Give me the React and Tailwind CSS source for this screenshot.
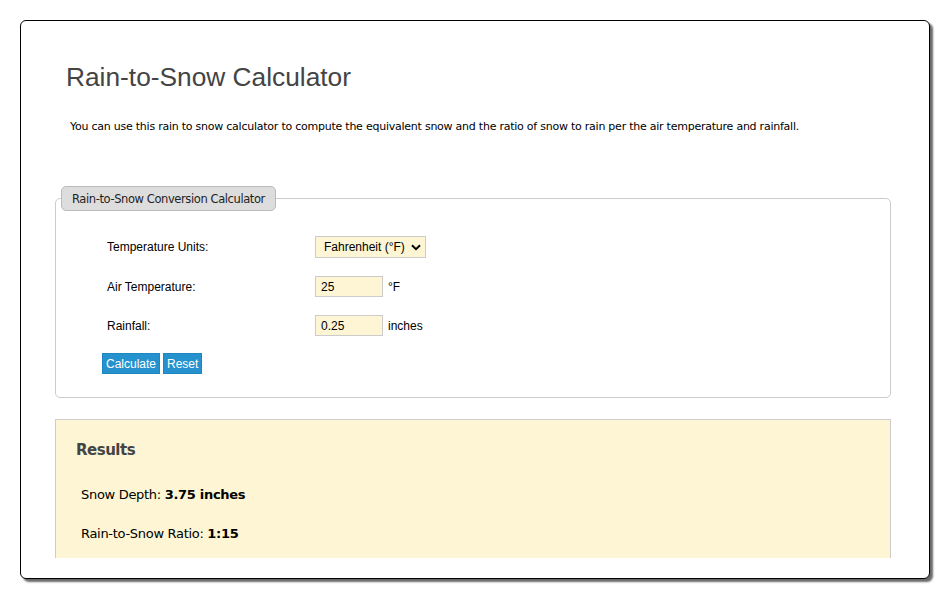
import React, { useState } from 'react';

const tahoma = { fontFamily: '"DejaVu Sans", Verdana, sans-serif' };

export default function App() {
    const [units, setUnits] = useState('F');
    const [temp, setTemp] = useState('25');
    const [rain, setRain] = useState('0.25');

    return (
        <div className="min-h-[598px] bg-white pt-[20px] pl-[20px]" style={{ fontFamily: '"Liberation Sans", Arial, sans-serif' }}>
            <div className="w-[910px] h-[559px] flex flex-col border border-black rounded-[6px] bg-white shadow-[3px_3px_2px_#6b6b6b] pl-[34px] pr-[38px] pb-[20px]">
                <div className="flex-1 overflow-hidden">
                    <h1 className="mt-[41px] ml-[11px] text-[26.3px] leading-[30px] text-[#444]">Rain-to-Snow Calculator</h1>
                    <p className="mt-[27px] ml-[15px] text-[11px] leading-[16px] tracking-[-0.24px] text-black" style={tahoma}>
                        You can use this rain to snow calculator to compute the equivalent snow and the ratio of snow to rain per the air temperature and rainfall.
                    </p>

                    <fieldset className="mt-[51px] border border-[#ccc] rounded-[5px] px-[5px] pb-[23px]">
                        <legend className="h-[25px] px-[10px] leading-[24px] bg-[#dddddd] border border-[#bbb] rounded-[5px] text-[11.5px] tracking-[-0.4px] text-[#222]" style={tahoma}>
                            Rain-to-Snow Conversion Calculator
                        </legend>
                        <div className="pl-[46px] pt-[25px] text-[12px] text-black">
                            <div className="flex items-center h-[22px]">
                                <label className="w-[208px]">Temperature Units:</label>
                                <div className="relative w-[111px] h-[22px]">
                                    <select
                                        value={units}
                                        onChange={(e) => setUnits(e.target.value)}
                                        className="appearance-none w-full h-full bg-[#fdf5d4] border border-[#ccc] pl-[8px] text-[12px] outline-none"
                                    >
                                        <option value="F">Fahrenheit (°F)</option>
                                        <option value="C">Celsius (°C)</option>
                                    </select>
                                    <svg className="absolute right-[5px] top-[8px] pointer-events-none" width="10" height="7" viewBox="0 0 10 7">
                                        <path d="M1 1.2 L5 5.2 L9 1.2" fill="none" stroke="#000" strokeWidth="2" />
                                    </svg>
                                </div>
                            </div>
                            <div className="flex items-center h-[21px] mt-[18px]">
                                <label className="w-[208px]">Air Temperature:</label>
                                <input
                                    value={temp}
                                    onChange={(e) => setTemp(e.target.value)}
                                    className="w-[68px] h-[21px] bg-[#fdf5d4] border border-[#ccc] pl-[5px] text-[12px] outline-none"
                                />
                                <span className="ml-[5px]">°{units}</span>
                            </div>
                            <div className="flex items-center h-[21px] mt-[18px]">
                                <label className="w-[208px]">Rainfall:</label>
                                <input
                                    value={rain}
                                    onChange={(e) => setRain(e.target.value)}
                                    className="w-[68px] h-[21px] bg-[#fdf5d4] border border-[#ccc] pl-[5px] text-[12px] outline-none"
                                />
                                <span className="ml-[5px]">inches</span>
                            </div>
                            <div className="flex gap-[3px] mt-[17px] -ml-[5px]">
                                <button className="h-[21px] px-[3px] bg-[#2592ce] border border-[#1f86bf] text-white text-[12px]">Calculate</button>
                                <button className="h-[21px] px-[3px] bg-[#2592ce] border border-[#1f86bf] text-white text-[12px]">Reset</button>
                            </div>
                        </div>
                    </fieldset>

                    <div className="mt-[21px] bg-[#fdf5d4] border border-[#ccc] pl-[20px] pt-[19px] pb-[30px]" style={tahoma}>
                        <h2 className="text-[15px] leading-[22px] font-bold tracking-[-0.5px] text-[#444]">Results</h2>
                        <p className="mt-[24px] ml-[5px] text-[13px] leading-[20px] tracking-[-0.3px] text-black">
                            Snow Depth: <b>3.75 inches</b>
                        </p>
                        <p className="mt-[19px] ml-[5px] text-[13px] leading-[20px] tracking-[-0.3px] text-black">
                            Rain-to-Snow Ratio: <b>1:15</b>
                        </p>
                    </div>
                </div>
            </div>
        </div>
    );
}
